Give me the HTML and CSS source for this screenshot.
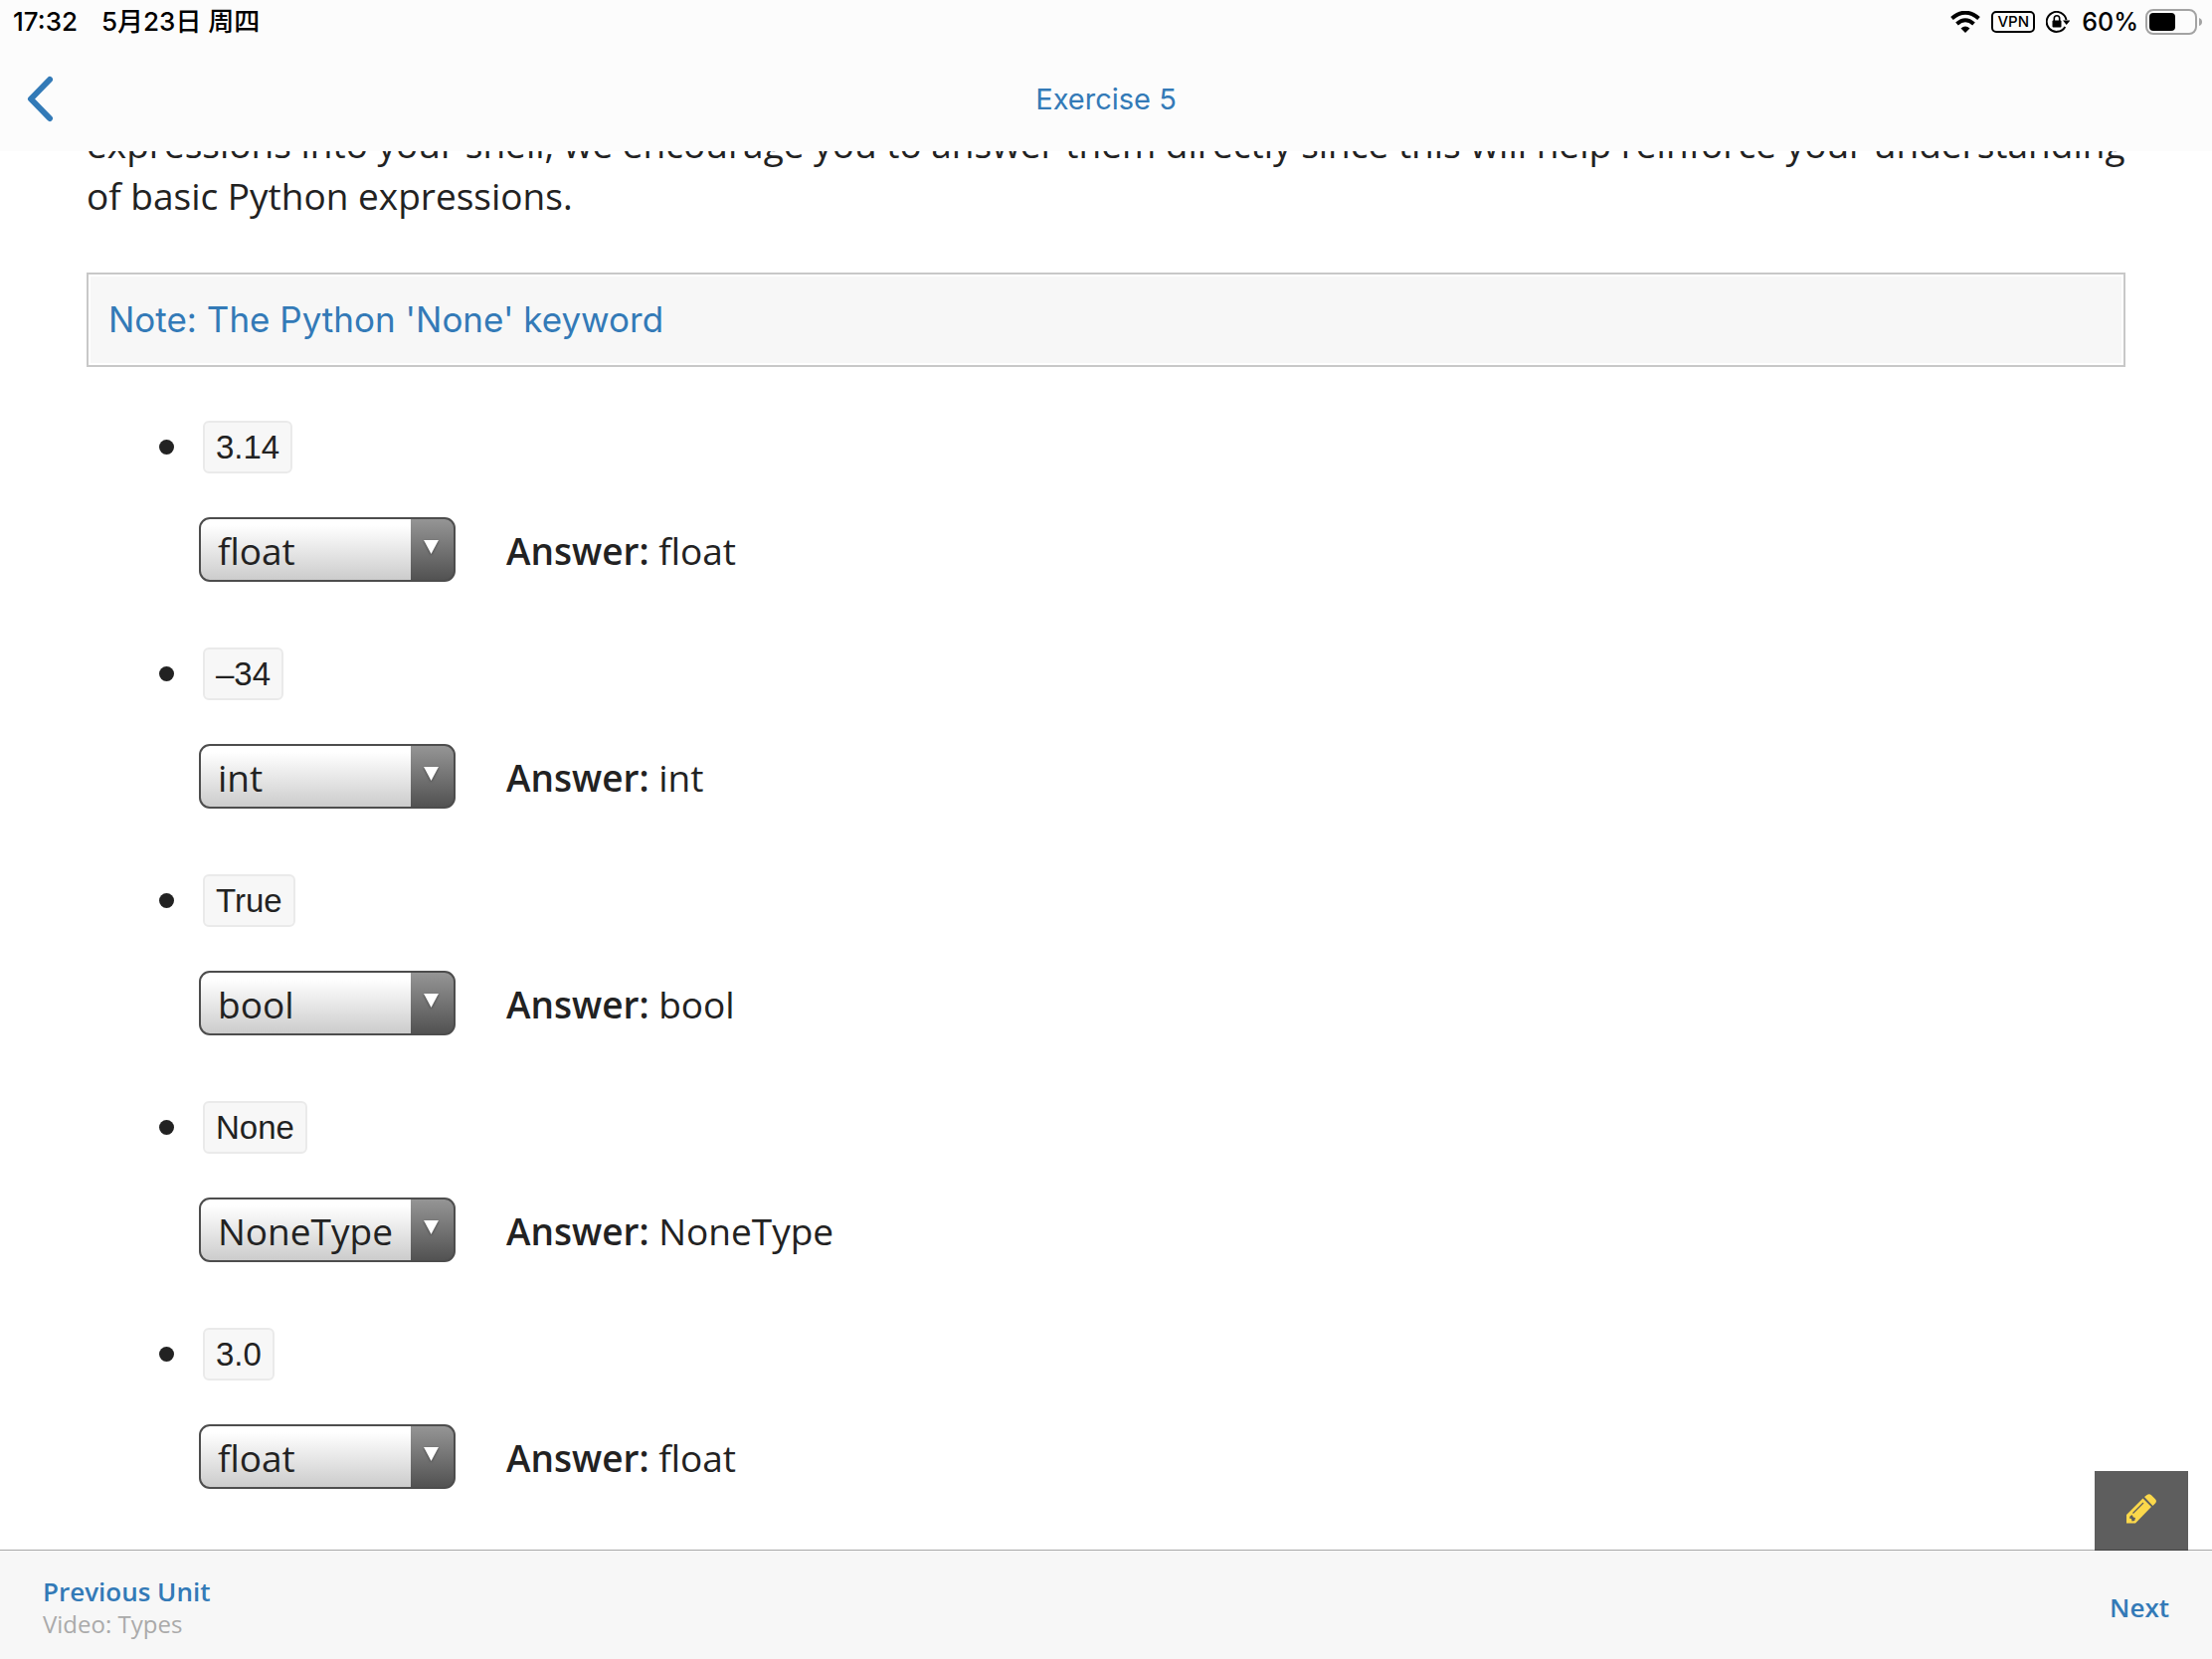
FILE: index.html
```html
<!DOCTYPE html>
<html lang="en">
<head>
<meta charset="utf-8">
<meta name="viewport" content="width=device-width, initial-scale=1">
<title>Exercise 5</title>
<link rel="stylesheet" href="styles.css">
</head>
<body>
<header class="top">
  <div class="status">
    <div class="status-group status-when">
      <span>17:32</span>
      <span lang="zh">5月23日 周四</span>
    </div>
    <div class="status-group">
      <svg class="wifi" width="30" height="22" viewBox="0 0 30 22" fill="none" stroke="#000" stroke-width="4" aria-hidden="true">
        <path d="M1.500 7.500Q15-4 28.500 7.500"/>
        <path d="M6.500 13Q15 5.500 23.500 13"/>
        <path d="M10.500 17.500Q15 13.500 19.500 17.500L15 22z" fill="#000" stroke="none"/>
      </svg>
      <span class="vpn">VPN</span>
      <svg class="lock" width="24" height="22" viewBox="0 0 24 22" aria-hidden="true">
        <path d="M19.300 16A10 10 0 1 1 20.500 9" fill="none" stroke="#000" stroke-width="2"/>
        <path d="M17 9.500h7.500L20.700 14z"/>
        <rect x="6.500" y="9.500" width="9" height="7" rx="1"/>
        <path d="M8.300 10V7.500a2.700 2.700 0 0 1 5.400 0V10" fill="none" stroke="#000" stroke-width="1.600"/>
      </svg>
      <span class="percent">60%</span>
      <svg class="battery" width="58" height="26" viewBox="0 0 58 26" aria-hidden="true">
        <rect x="1" y="1" width="50" height="24" rx="7" fill="none" stroke="#a3a3a3" stroke-width="2"/>
        <rect x="4" y="4" width="26" height="18" rx="4"/>
        <path d="M54 9q3 1 3 4t-3 4z" fill="#a3a3a3"/>
      </svg>
    </div>
  </div>
  <nav class="nav">
    <button class="back" type="button" aria-label="Back">
      <svg width="28" height="48" viewBox="0 0 28 48" fill="none" stroke="#337ab7" stroke-width="6" stroke-linecap="round" stroke-linejoin="round" aria-hidden="true"><path d="M23 4 4 23.500 23 43"/></svg>
    </button>
    <h1 class="title">Exercise 5</h1>
  </nav>
</header>

<main class="content">
  <p class="intro">expressions into your shell, we encourage you to answer them directly since this will help reinforce your understanding of basic Python expressions.</p>
  <a class="note" href="#none-keyword">Note: The Python 'None' keyword</a>
  <ul class="questions">
    <li class="question">
      <code class="expr">3.14</code>
      <div class="reply">
        <div class="picker">
          <select aria-label="Type of 3.14"><option>int</option><option selected>float</option><option>bool</option><option>NoneType</option></select>
          <svg class="arrow" width="15" height="14" viewBox="0 0 15 14" aria-hidden="true"><path d="M0 0h15L7.500 14z" fill="#fff"/></svg>
        </div>
        <p class="answer"><strong>Answer:</strong> float</p>
      </div>
    </li>
    <li class="question">
      <code class="expr">–34</code>
      <div class="reply">
        <div class="picker">
          <select aria-label="Type of –34"><option selected>int</option><option>float</option><option>bool</option><option>NoneType</option></select>
          <svg class="arrow" width="15" height="14" viewBox="0 0 15 14" aria-hidden="true"><path d="M0 0h15L7.500 14z" fill="#fff"/></svg>
        </div>
        <p class="answer"><strong>Answer:</strong> int</p>
      </div>
    </li>
    <li class="question">
      <code class="expr">True</code>
      <div class="reply">
        <div class="picker">
          <select aria-label="Type of True"><option>int</option><option>float</option><option selected>bool</option><option>NoneType</option></select>
          <svg class="arrow" width="15" height="14" viewBox="0 0 15 14" aria-hidden="true"><path d="M0 0h15L7.500 14z" fill="#fff"/></svg>
        </div>
        <p class="answer"><strong>Answer:</strong> bool</p>
      </div>
    </li>
    <li class="question">
      <code class="expr">None</code>
      <div class="reply">
        <div class="picker">
          <select aria-label="Type of None"><option>int</option><option>float</option><option>bool</option><option selected>NoneType</option></select>
          <svg class="arrow" width="15" height="14" viewBox="0 0 15 14" aria-hidden="true"><path d="M0 0h15L7.500 14z" fill="#fff"/></svg>
        </div>
        <p class="answer"><strong>Answer:</strong> NoneType</p>
      </div>
    </li>
    <li class="question">
      <code class="expr">3.0</code>
      <div class="reply">
        <div class="picker">
          <select aria-label="Type of 3.0"><option>int</option><option selected>float</option><option>bool</option><option>NoneType</option></select>
          <svg class="arrow" width="15" height="14" viewBox="0 0 15 14" aria-hidden="true"><path d="M0 0h15L7.500 14z" fill="#fff"/></svg>
        </div>
        <p class="answer"><strong>Answer:</strong> float</p>
      </div>
    </li>
  </ul>
</main>

<footer class="bottom">
  <button class="edit" type="button" aria-label="Notes">
    <svg width="30" height="30" viewBox="0 0 30 30" aria-hidden="true">
      <path d="M0 21 16.500 4.500 25 13 9 29.500H0z" fill="#fbd84b"/>
      <path d="M18 3 21 .8q2-1.500 4 .4l4 4q1.800 2 .2 4L26.500 12z" fill="#fbd84b"/>
      <path d="M6.500 19.500 17 9" stroke="#5e5e5e" stroke-width="1.200"/>
      <path d="M3.500 22.500 5.500 21l1.500 2.500 2 .5-.8 3-2.700.5-.5-2.500-2-.5z" fill="#5e5e5e"/>
    </svg>
  </button>
  <a class="unit" href="#previous"><span class="unit-label">Previous Unit</span><span class="unit-name">Video: Types</span></a>
  <a class="unit unit-label" href="#next">Next</a>
</footer>
</body>
</html>
```
FILE: styles.css
```css
* { box-sizing: border-box; }

body {
  margin: 0;
  min-height: 100vh;
  display: flex;
  flex-direction: column;
  background: #fff;
  color: #222;
  font: 37px/52px "Open Sans", "Noto Sans", sans-serif;
}

p, h1, ul { margin: 0; padding: 0; }
button { padding: 0; border: 0; background: none; }
svg { display: block; }

/* Header bar, kept above the scrolled text */
.top {
  position: sticky;
  top: 0;
  z-index: 1;
  background: #fcfcfc;
  font-family: Inter, "Noto Sans CJK SC", sans-serif;
}
.status {
  height: 44px;
  padding: 0 9px 0 13px;
  display: flex;
  justify-content: space-between;
  align-items: center;
  color: #000;
  font-size: 25px;
  font-weight: 500;
  line-height: 44px;
}
.status-group { display: flex; align-items: center; }
.status-when { gap: 24px; font-size: 26px; }
.vpn {
  width: 44px;
  height: 22px;
  margin-left: 11px;
  border: 2px solid #000;
  border-radius: 5px;
  font-size: 15px;
  line-height: 18px;
  text-align: center;
}
.lock { margin-left: 11px; }
.percent { margin: 0 7px 0 12px; }

.nav {
  height: 108px;
  padding: 4px 27px 0;
  display: grid;
  grid-template-columns: 1fr auto 1fr;
  align-items: center;
}
.back { width: 28px; height: 50px; }
.title {
  color: #337ab7;
  font-size: 29px;
  font-weight: 400;
  line-height: 40px;
}

/* Reading area; its first line slides under the header */
.content {
  flex: 1;
  margin-top: -33px;
  padding: 0 87px;
}
.note {
  display: block;
  margin: 51px 0 54px;
  padding: 20px;
  border: 2px solid #c8c8c8;
  background: #f7f7f7;
  box-shadow: inset 0 0 0 2px #fff;
  color: #337ab7;
  font-family: Inter, sans-serif;
  font-size: 35px;
  line-height: 51px;
  text-decoration: none;
}
.questions { list-style: none; }
.question {
  display: grid;
  grid-template-columns: 15px auto;
  column-gap: 29px;
  row-gap: 44px;
  justify-content: start;
  align-items: center;
  margin-bottom: 66px;
  padding-left: 73px;
}
.question:last-child { margin-bottom: 0; }
.question::before {
  content: "";
  width: 15px;
  height: 15px;
  border-radius: 50%;
  background: #222;
}
.expr {
  justify-self: start;
  padding: 0 11px;
  border: 2px solid #eaeaea;
  border-radius: 6px;
  background: #f7f7f7;
  font: 33px/49px "Liberation Sans", sans-serif;
}
.reply {
  grid-column: 2;
  display: flex;
  align-items: center;
  gap: 51px;
  margin-left: -4px;
}
.picker { display: grid; }
.picker select, .picker .arrow { grid-area: 1 / 1; }
.picker select {
  appearance: none;
  width: 258px;
  height: 65px;
  padding: 2px 48px 0 17px;
  border: 2px solid #4d4d4d;
  border-radius: 11px;
  background:
    linear-gradient(#959595, #525252) right / 43px 100% no-repeat,
    linear-gradient(#fff 10%, #ccc);
  color: #222;
  font: inherit;
}
.picker .arrow {
  justify-self: end;
  margin: 23px 17px 0 0;
  pointer-events: none;
  filter: drop-shadow(0 1px 1px #444);
}
.answer { padding-top: 2px; }
.answer strong { font-weight: 600; }

/* Unit navigation */
.bottom {
  position: sticky;
  bottom: 0;
  height: 110px;
  padding: 0 43px;
  display: flex;
  justify-content: space-between;
  align-items: center;
  border-top: 1px solid #a8a8a8;
  background: #f7f7f7;
}
.unit {
  display: flex;
  flex-direction: column;
  padding-top: 4px;
  text-decoration: none;
}
.unit-label {
  color: #337ab7;
  font-size: 26px;
  font-weight: 600;
  line-height: 34px;
}
.unit-name {
  color: #aaa;
  font-size: 24px;
  line-height: 32px;
}
.edit {
  position: absolute;
  right: 24px;
  bottom: 100%;
  width: 94px;
  height: 80px;
  display: grid;
  place-items: center;
  padding-bottom: 4px;
  border-bottom: 1px solid #444;
  background: #5e5e5e;
}
```
